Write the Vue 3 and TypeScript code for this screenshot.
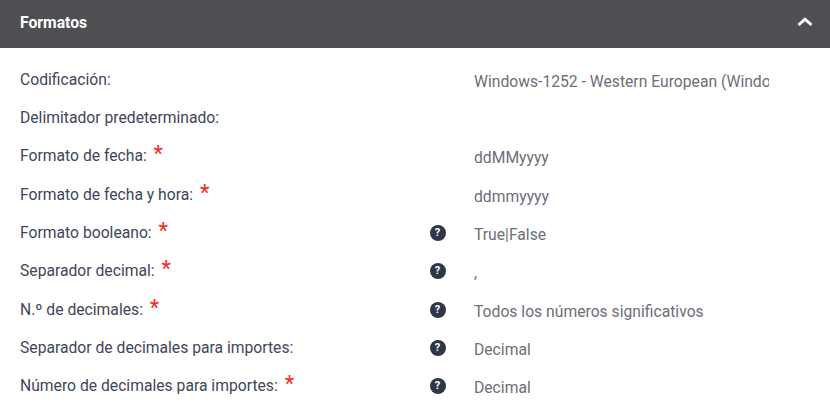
<template>
  <section class="panel">
    <header class="panel-header">
      <h2>Formatos</h2>
      <svg class="chevron" width="16" height="10" viewBox="0 0 16 10" fill="none">
        <path d="M1.5 8L8 2.2L14.5 8" stroke="#fff" stroke-width="3"/>
      </svg>
    </header>

    <div class="rows">
      <div v-for="row in rows" :key="row.label" class="row">
        <div class="label">
          {{ row.label }}
          <span v-if="row.required" class="required">*</span>
        </div>
        <div class="help">
          <span v-if="row.help" class="help-icon">?</span>
        </div>
        <div class="value">{{ row.value }}</div>
      </div>
    </div>
  </section>
</template>

<script setup lang="ts">
interface Row {
  label: string
  value: string
  required?: boolean
  help?: boolean
}

const rows: Row[] = [
  { label: 'Codificación:', value: 'Windows-1252 - Western European (Windows)' },
  { label: 'Delimitador predeterminado:', value: '' },
  { label: 'Formato de fecha:', value: 'ddMMyyyy', required: true },
  { label: 'Formato de fecha y hora:', value: 'ddmmyyyy', required: true },
  { label: 'Formato booleano:', value: 'True|False', required: true, help: true },
  { label: 'Separador decimal:', value: ',', required: true, help: true },
  { label: 'N.º de decimales:', value: 'Todos los números significativos', required: true, help: true },
  { label: 'Separador de decimales para importes:', value: 'Decimal', help: true },
  { label: 'Número de decimales para importes:', value: 'Decimal', required: true, help: true }
]
</script>

<style>
html, body {
  margin: 0;
  background: #fff;
  overflow: hidden;
}
</style>

<style scoped>
.panel {
  width: 830px;
  height: 409px;
  overflow: hidden;
  font-family: Roboto, sans-serif;
  font-size: 15.7px;
}

.panel-header {
  height: 48px;
  background: #4e4f53;
  display: flex;
  align-items: center;
  justify-content: space-between;
  padding: 0 17px 4px 20px;
  box-sizing: border-box;
}

.panel-header h2 {
  margin: 0;
  font-size: 15.7px;
  font-weight: 700;
  color: #fff;
}

.rows {
  padding-top: 12.6px;
}

.row {
  display: flex;
  height: 38.33px;
  padding-left: 20px;
  color: #40465a;
}

.label {
  width: 409.5px;
  line-height: 38px;
  white-space: nowrap;
}

.required {
  color: #f5291c;
  font-size: 22px;
  line-height: 20px;
  margin-left: 3px;
  vertical-align: 0;
}

.help {
  width: 44.5px;
  padding-top: 11px;
}

.help-icon {
  display: block;
  width: 16px;
  height: 16px;
  border-radius: 50%;
  background: #2f3648;
  color: #fff;
  font-size: 11px;
  font-weight: 700;
  line-height: 16px;
  text-align: center;
}

.value {
  width: 295px;
  overflow: hidden;
  white-space: nowrap;
  color: #6d6e78;
  line-height: 42px;
}
</style>
